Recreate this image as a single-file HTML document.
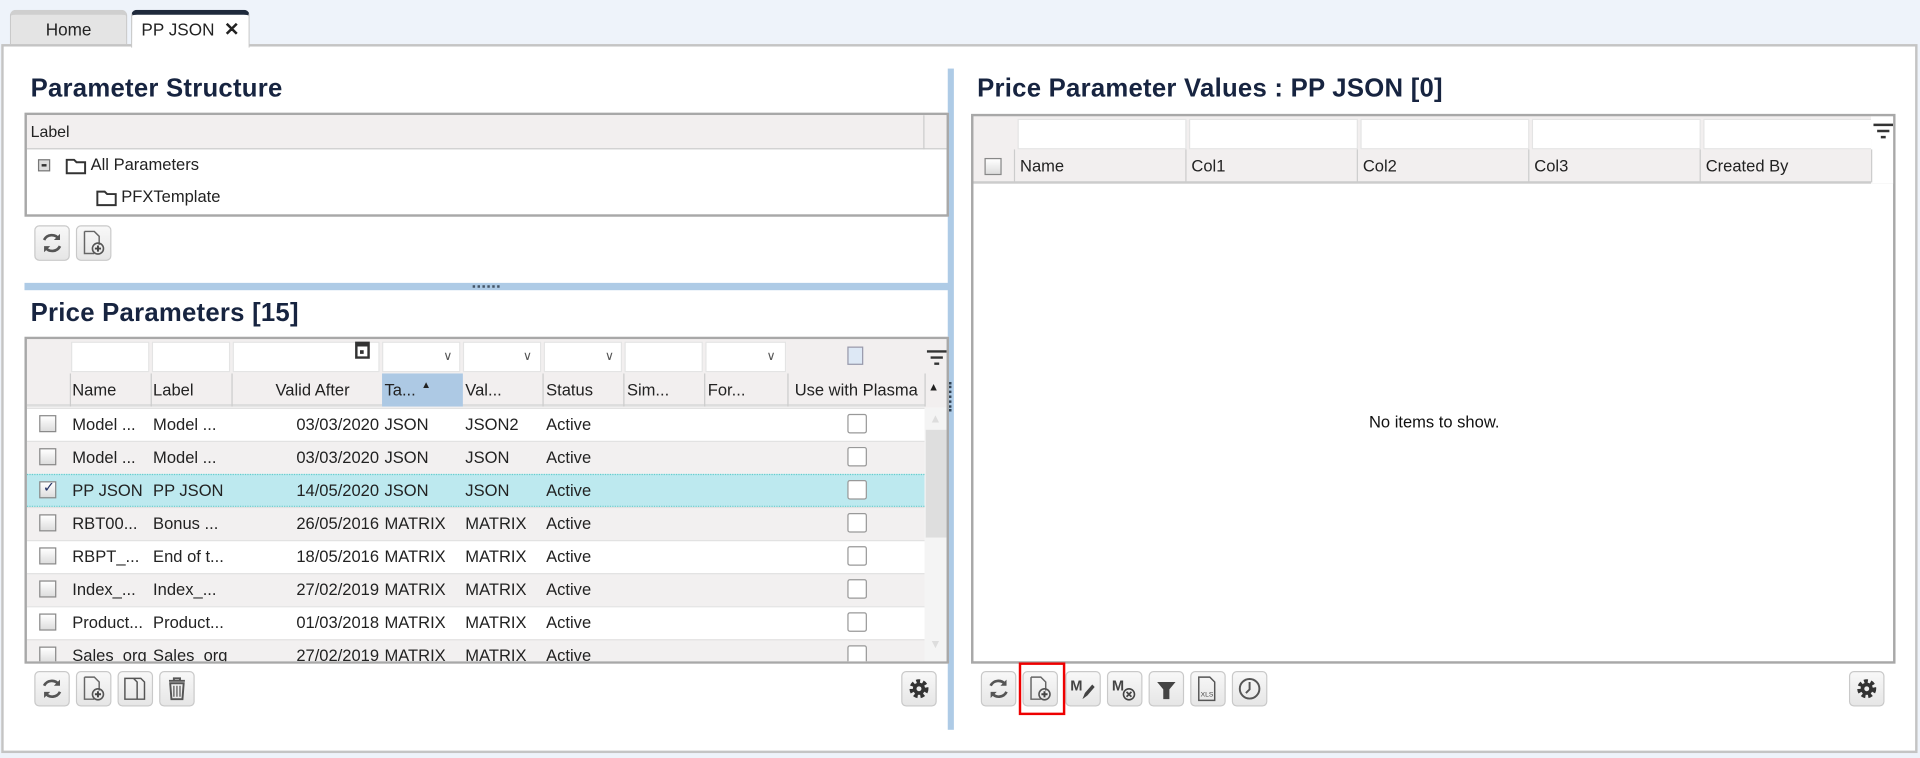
<!DOCTYPE html>
<html><head><meta charset="utf-8"><style>
*{box-sizing:border-box;margin:0;padding:0}
html,body{width:1920px;height:758px;overflow:hidden;background:#eef3fa;font-family:"Liberation Sans",Arial,sans-serif;color:#222}
#w{position:absolute;left:0;top:0;width:1568px;height:619px;transform:scale(1.22449);transform-origin:0 0}
.a{position:absolute}
.tab{position:absolute;top:8px;height:29px;border:1px solid #c9c9c9;border-bottom:none;border-radius:5px 5px 0 0;font-size:14px;text-align:center;line-height:28px}
.panel{position:absolute;left:1px;top:36px;width:1565px;height:579px;background:#fff;border:2px solid #c4c4c4}
.h{position:absolute;font-weight:bold;font-size:21px;color:#172440;letter-spacing:.2px}
.grid{position:absolute;border:2px solid #a8a8a8;background:#fff;overflow:hidden}
.cell{position:absolute;font-size:13.5px;white-space:nowrap;overflow:hidden;line-height:27px}
.hd{background:#f2efef}
.btn{position:absolute;width:29px;height:29px;border:1px solid #c9c9c9;border-radius:4px;background:linear-gradient(#f8f8f8,#e6e6e6)}
.btn svg{position:absolute;left:3px;top:3px}
.cb{position:absolute;width:14px;height:14px;border:1px solid #888;background:linear-gradient(#fff,#ddd)}
.cb2{position:absolute;width:16px;height:16px;border:1px solid #999;background:#fff;border-radius:2px}
.fi{position:absolute;background:#fff;border:1px solid #e4e4e4}
</style></head><body><div id="w">
<div class="tab" style="left:8px;width:96px;background:#e4e4e4;border-top:4px solid #cfcfcf;line-height:24px">Home</div>
<div class="tab" style="left:107px;width:97px;background:#fff;border-top:4px solid #1f2a3c;line-height:24px;z-index:2;height:31px">PP JSON &nbsp;<b style="font-size:15px">✕</b></div>
<div class="panel"></div>
<div class="a" style="left:774px;top:56px;width:5px;height:540px;background:#aecbe6"></div>
<div class="a" style="left:775px;top:312px;width:2px;height:24px;border-left:2px dotted #345"></div>
<div class="h" style="left:25px;top:61px">Parameter Structure</div>
<div class="grid" style="left:20px;top:92px;width:755px;height:85px">
 <div class="a hd" style="left:0;top:0;width:753px;height:28px;border-bottom:1px solid #ccc"></div>
 <div class="a" style="left:732px;top:0;width:1px;height:28px;background:#ccc"></div>
 <div class="cell" style="left:3px;top:0;font-size:13px">Label</div>
 <div class="a" style="left:9px;top:36px;width:10px;height:10px;border:1px solid #777;background:#ddd"><div class="a" style="left:2px;top:3px;width:4px;height:2px;background:#333"></div></div>
 <svg class="a" style="left:31px;top:33px" width="18" height="16"><path d="M1.5 3.5h6l2 2h7v9h-15z" fill="none" stroke="#333" stroke-width="1.6"/></svg>
 <div class="cell" style="left:52px;top:27px">All Parameters</div>
 <svg class="a" style="left:56px;top:59px" width="18" height="16"><path d="M1.5 3.5h6l2 2h7v9h-15z" fill="none" stroke="#333" stroke-width="1.6"/></svg>
 <div class="cell" style="left:77px;top:53px">PFXTemplate</div>
</div>
<div class="btn" style="left:28px;top:184px"><svg width="21" height="21" viewBox="0 0 21 21"><path d="M16 7a7 7 0 0 0-12 1M5 14a7 7 0 0 0 12-1" fill="none" stroke="#555" stroke-width="2.2"/><path d="M17 3v5h-5zM4 18v-5h5z" fill="#555"/></svg></div>
<div class="btn" style="left:62px;top:184px"><svg width="21" height="21" viewBox="0 0 21 21"><path d="M3 1h8l4 4v7M3 1v18h8" fill="none" stroke="#666" stroke-width="1.2"/><circle cx="14" cy="15" r="4.5" fill="none" stroke="#555" stroke-width="1.3"/><path d="M14 12.5v5M11.5 15h5" stroke="#444" stroke-width="1.6"/></svg></div>
<div class="a" style="left:20px;top:231px;width:755px;height:6px;background:#aecbe6"></div>
<div class="a" style="left:386px;top:233px;width:22px;height:2px;border-top:2px dotted #456"></div>
<div class="h" style="left:25px;top:244px">Price Parameters [15]</div>
<div class="grid" style="left:20px;top:275px;width:755px;height:267px">
 <div class="a hd" style="left:0;top:0;width:753px;height:56px"></div>
 <div class="fi" style="left:36px;top:2px;width:64px;height:25px"></div>
 <div class="fi" style="left:102px;top:2px;width:64px;height:25px"></div>
 <div class="fi" style="left:168px;top:2px;width:120px;height:25px"></div>
 <div class="a" style="left:268px;top:2px;width:12px;height:14px;border:2px solid #333;border-top-width:4px;background:#fff"><div class="a" style="left:2px;top:3px;width:3px;height:3px;background:#333"></div></div>
 <div class="fi" style="left:290px;top:2px;width:64px;height:25px"></div>
 <div class="fi" style="left:356px;top:2px;width:64px;height:25px"></div>
 <div class="fi" style="left:422px;top:2px;width:64px;height:25px"></div>
 <div class="fi" style="left:488px;top:2px;width:64px;height:25px"></div>
 <div class="fi" style="left:554px;top:2px;width:66px;height:25px"></div>
 <div class="cell" style="left:340px;top:1px;font-size:10px;color:#555">∨</div>
 <div class="cell" style="left:405px;top:1px;font-size:10px;color:#555">∨</div>
 <div class="cell" style="left:472px;top:1px;font-size:10px;color:#555">∨</div>
 <div class="cell" style="left:604px;top:1px;font-size:10px;color:#555">∨</div>
 <div class="a" style="left:670px;top:6px;width:13px;height:15px;border:1px solid #99a;background:#dde8f5"></div>
 <svg class="a" style="left:734px;top:8px" width="18" height="16"><path d="M1 2h16M4 7h10M7 12h4" stroke="#333" stroke-width="2"/></svg>
 <div class="a" style="left:0;top:28px;width:733px;height:27px;border-bottom:2px solid #ddd"></div>
 <div class="a" style="left:290px;top:28px;width:66px;height:27px;background:#adc9e4"></div>
 <div class="cell" style="left:37px;top:28px">Name</div>
 <div class="cell" style="left:103px;top:28px">Label</div>
 <div class="cell" style="left:203px;top:28px">Valid After</div>
 <div class="cell" style="left:292px;top:28px;overflow:visible">Ta...</div>
 <div class="cell" style="left:322px;top:24px;font-size:8px">▲</div>
 <div class="cell" style="left:358px;top:28px">Val...</div>
 <div class="cell" style="left:424px;top:28px">Status</div>
 <div class="cell" style="left:490px;top:28px">Sim...</div>
 <div class="cell" style="left:556px;top:28px">For...</div>
 <div class="cell" style="left:627px;top:28px">Use with Plasma</div>
 <div class="a" style="left:35px;top:28px;width:1px;height:27px;background:#ccc"></div>
 <div class="a" style="left:101px;top:28px;width:1px;height:27px;background:#ccc"></div>
 <div class="a" style="left:167px;top:28px;width:1px;height:27px;background:#ccc"></div>
 <div class="a" style="left:421px;top:28px;width:1px;height:27px;background:#ccc"></div>
 <div class="a" style="left:487px;top:28px;width:1px;height:27px;background:#ccc"></div>
 <div class="a" style="left:553px;top:28px;width:1px;height:27px;background:#ccc"></div>
 <div class="a" style="left:621px;top:28px;width:1px;height:27px;background:#ccc"></div>
 <div class="a" style="left:733px;top:28px;width:1px;height:27px;background:#ccc"></div>
 <div class="cell" style="left:736px;top:26px;font-size:9px">▲</div>
 <div class="a" style="left:733px;top:56px;width:20px;height:210px;background:#f4f4f4"></div>
 <div class="a" style="left:734px;top:74px;width:18px;height:88px;background:#dedede"></div>
 <div class="cell" style="left:737px;top:52px;font-size:10px;color:#ddd">▲</div>
 <div class="cell" style="left:737px;top:236px;font-size:10px;color:#ddd">▼</div>
 <div id="rows"></div>
</div>
<div class="btn" style="left:28px;top:548px"><svg width="21" height="21" viewBox="0 0 21 21"><path d="M16 7a7 7 0 0 0-12 1M5 14a7 7 0 0 0 12-1" fill="none" stroke="#555" stroke-width="2.2"/><path d="M17 3v5h-5zM4 18v-5h5z" fill="#555"/></svg></div>
<div class="btn" style="left:62px;top:548px"><svg width="21" height="21" viewBox="0 0 21 21"><path d="M3 1h8l4 4v7M3 1v18h8" fill="none" stroke="#666" stroke-width="1.2"/><circle cx="14" cy="15" r="4.5" fill="none" stroke="#555" stroke-width="1.3"/><path d="M14 12.5v5M11.5 15h5" stroke="#444" stroke-width="1.6"/></svg></div>
<div class="btn" style="left:96px;top:548px"><svg width="21" height="21" viewBox="0 0 21 21"><path d="M2 2h7l3 3v14H2zM9 2h6l3 3v14h-6" fill="none" stroke="#555" stroke-width="1.2"/></svg></div>
<div class="btn" style="left:130px;top:548px"><svg width="21" height="21" viewBox="0 0 21 21"><path d="M4 4h13M8 4V2h5v2M5 6h11l-1 13H6z" fill="none" stroke="#555" stroke-width="1.6"/><path d="M8 8v9M10.5 8v9M13 8v9" stroke="#555"/></svg></div>
<div class="btn" style="left:736px;top:548px"><svg width="21" height="21" viewBox="0 0 21 21"><circle cx="10.5" cy="10.5" r="6" fill="none" stroke="#333" stroke-width="3.5" stroke-dasharray="3 2.2"/><circle cx="10.5" cy="10.5" r="5" fill="#333"/><circle cx="10.5" cy="10.5" r="2" fill="#eee"/></svg></div>
<div class="h" style="left:798px;top:61px">Price Parameter Values : PP JSON [0]</div>
<div class="grid" style="left:793px;top:93px;width:755px;height:449px">
 <div class="a hd" style="left:0;top:0;width:753px;height:55px;border-bottom:2px solid #ccc"></div>
 <div class="fi" style="left:36px;top:2px;width:138px;height:25px"></div>
 <div class="fi" style="left:176px;top:2px;width:138px;height:25px"></div>
 <div class="fi" style="left:316px;top:2px;width:138px;height:25px"></div>
 <div class="fi" style="left:456px;top:2px;width:138px;height:25px"></div>
 <div class="fi" style="left:596px;top:2px;width:138px;height:25px"></div>
 <div class="a" style="left:733px;top:0;width:20px;height:55px;background:#fff"></div>
 <svg class="a" style="left:734px;top:5px" width="18" height="16"><path d="M1 2h16M4 7h10M7 12h4" stroke="#333" stroke-width="2"/></svg>
 <div class="cb" style="left:9px;top:34px"></div>
 <div class="cell" style="left:38px;top:27px">Name</div>
 <div class="cell" style="left:178px;top:27px">Col1</div>
 <div class="cell" style="left:318px;top:27px">Col2</div>
 <div class="cell" style="left:458px;top:27px">Col3</div>
 <div class="cell" style="left:598px;top:27px">Created By</div>
 <div class="a" style="left:33px;top:27px;width:1px;height:27px;background:#ccc"></div>
 <div class="a" style="left:173px;top:27px;width:1px;height:27px;background:#ccc"></div>
 <div class="a" style="left:313px;top:27px;width:1px;height:27px;background:#ccc"></div>
 <div class="a" style="left:453px;top:27px;width:1px;height:27px;background:#ccc"></div>
 <div class="a" style="left:593px;top:27px;width:1px;height:27px;background:#ccc"></div>
 <div class="a" style="left:733px;top:27px;width:1px;height:27px;background:#ccc"></div>
 <div class="cell" style="left:323px;top:236px;font-size:13.5px;color:#111">No items to show.</div>
</div>
<div id="rb"></div>
<div class="a" style="left:832px;top:541px;width:38px;height:43px;border:2px solid #e00"></div>
</div>
<script>
var r=[["Model ...","Model ...","03/03/2020","JSON","JSON2"],["Model ...","Model ...","03/03/2020","JSON","JSON"],["PP JSON","PP JSON","14/05/2020","JSON","JSON"],["RBT00...","Bonus ...","26/05/2016","MATRIX","MATRIX"],["RBPT_...","End of t...","18/05/2016","MATRIX","MATRIX"],["Index_...","Index_...","27/02/2019","MATRIX","MATRIX"],["Product...","Product...","01/03/2018","MATRIX","MATRIX"],["Sales_org","Sales_org","27/02/2019","MATRIX","MATRIX"]];
var h="";r.forEach(function(d,i){var t=56+i*27;var bg=i==2?"#bde9ef":(i%2?"#f2f0f0":"#fff");
h+='<div class="a" style="left:0;top:'+t+'px;width:733px;height:27px;background:'+bg+';border-top:'+(i==2?'1px dotted #6cc':'1px solid #e2e2e2')+(i==2?';border-bottom:1px dotted #6cc':'')+'"></div>';
h+='<div class="cb" style="left:10px;top:'+(t+6)+'px">'+(i==2?'<span style="position:absolute;left:2px;top:-3px;font-size:12px;color:#236">✓</span>':'')+'</div>';
h+='<div class="cell" style="left:37px;top:'+t+'px;width:64px">'+d[0]+'</div><div class="cell" style="left:103px;top:'+t+'px;width:64px">'+d[1]+'</div><div class="cell" style="left:220px;top:'+t+'px">'+d[2]+'</div><div class="cell" style="left:292px;top:'+t+'px">'+d[3]+'</div><div class="cell" style="left:358px;top:'+t+'px">'+d[4]+'</div><div class="cell" style="left:424px;top:'+t+'px">Active</div><div class="cb2" style="left:670px;top:'+(t+5)+'px"></div>';});
document.getElementById("rows").outerHTML=h;
var ic=['<path d="M16 7a7 7 0 0 0-12 1M5 14a7 7 0 0 0 12-1" fill="none" stroke="#555" stroke-width="2.2"/><path d="M17 3v5h-5zM4 18v-5h5z" fill="#555"/>',
'<path d="M3 1h8l4 4v7M3 1v18h8" fill="none" stroke="#666" stroke-width="1.2"/><circle cx="14" cy="15" r="4.5" fill="none" stroke="#555" stroke-width="1.3"/><path d="M14 12.5v5M11.5 15h5" stroke="#444" stroke-width="1.6"/>',
'<text x="0" y="12" font-size="12" font-weight="bold" fill="#444" font-family="Liberation Sans">M</text><path d="M10 19l2-5 6-7 2 2-6 7z" fill="#444"/>',
'<text x="0" y="12" font-size="12" font-weight="bold" fill="#444" font-family="Liberation Sans">M</text><circle cx="14" cy="15" r="4.5" fill="none" stroke="#444" stroke-width="1.3"/><path d="M12 13l4 4M16 13l-4 4" stroke="#444" stroke-width="1.4"/>',
'<path d="M3 2h15M3 5h15l-5 6v8h-5v-8z" fill="#444"/>',
'<path d="M3 1h9l4 4v15H3z" fill="none" stroke="#555" stroke-width="1.2"/><text x="4.5" y="17" font-size="5.5" fill="#444" font-family="Liberation Sans">XLS</text>',
'<circle cx="10.5" cy="10.5" r="8" fill="none" stroke="#555" stroke-width="1.6"/><path d="M10.5 5v6l-3 3" fill="none" stroke="#555" stroke-width="1.6"/>'];
var xs=[801,835,870,904,938,972,1006],o="";
xs.forEach(function(x,i){o+='<div class="btn" style="left:'+x+'px;top:548px"><svg width="21" height="21" viewBox="0 0 21 21">'+ic[i]+'</svg></div>';});
o+='<div class="btn" style="left:1510px;top:548px"><svg width="21" height="21" viewBox="0 0 21 21"><circle cx="10.5" cy="10.5" r="6" fill="none" stroke="#333" stroke-width="3.5" stroke-dasharray="3 2.2"/><circle cx="10.5" cy="10.5" r="5" fill="#333"/><circle cx="10.5" cy="10.5" r="2" fill="#eee"/></svg></div>';
document.getElementById("rb").outerHTML=o;
</script>
</body></html>
